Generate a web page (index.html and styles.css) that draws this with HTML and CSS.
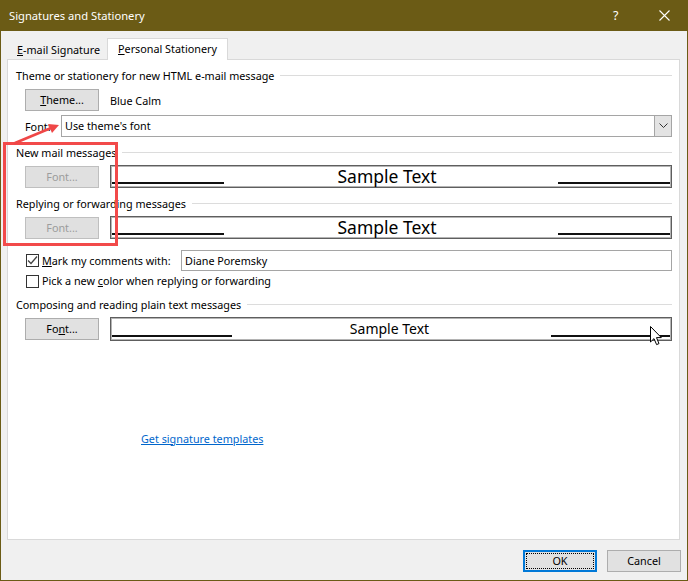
FILE: index.html
```html
<!DOCTYPE html>
<html>
<head>
<meta charset="utf-8">
<title>Signatures and Stationery</title>
<link rel="stylesheet" href="styles.css">
</head>
<body>
<div class="win">
  <div class="titlebar">
    <span class="title">Signatures and Stationery</span>
    <span class="help">?</span>
    <span class="close">
      <svg width="11" height="11" viewBox="0 0 11 11"><path d="M0.5 0.5 L10.5 10.5 M10.5 0.5 L0.5 10.5" stroke="#fff" stroke-width="1.1" fill="none"/></svg>
    </span>
  </div>
  <div class="client">
    <div class="tabs">
      <div class="tab"><span><u>E</u>-mail Signature</span></div>
      <div class="tab active"><span><u>P</u>ersonal Stationery</span></div>
    </div>
    <div class="panel">
      <div class="grp"><span>Theme or stationery for new HTML e-mail message</span><i class="rule"></i></div>
      <div class="row theme-row">
        <div class="btn"><u>T</u>heme...</div>
        <span class="theme-name">Blue Calm</span>
      </div>
      <div class="row font-row">
        <span class="font-label">Font:</span>
        <div class="select">
          <span class="select-text">Use theme's font</span>
          <span class="select-arrow">
            <svg width="9" height="6" viewBox="0 0 9 6"><path d="M0.5 0.5 L4.5 4.5 L8.5 0.5" stroke="#333" stroke-width="1" fill="none"/></svg>
          </span>
        </div>
      </div>
      <div class="grp g2"><span>New mail messages</span><i class="rule"></i></div>
      <div class="row sample-row">
        <div class="btn disabled">Font...</div>
        <div class="sample big">
          <i class="sline left"></i>
          <span class="stext">Sample Text</span>
          <i class="sline right"></i>
        </div>
      </div>
      <div class="grp g3"><span>Replying or forwarding messages</span><i class="rule"></i></div>
      <div class="row sample-row">
        <div class="btn disabled">Font...</div>
        <div class="sample big">
          <i class="sline left"></i>
          <span class="stext">Sample Text</span>
          <i class="sline right"></i>
        </div>
      </div>
      <div class="row check-row c1">
        <span class="chk checked">
          <svg width="11" height="11" viewBox="0 0 11 11"><path d="M1 5.5 L4 8.5 L10 1.5" stroke="#444" stroke-width="1.3" fill="none"/></svg>
        </span>
        <span class="chk-label"><u>M</u>ark my comments with:</span>
        <div class="textbox">Diane Poremsky</div>
      </div>
      <div class="row check-row c2">
        <span class="chk"></span>
        <span class="chk-label">Pick a new <u>c</u>olor when replying or forwarding</span>
      </div>
      <div class="grp g4"><span>Composing and reading plain text messages</span><i class="rule"></i></div>
      <div class="row sample-row plain-row">
        <div class="btn">Fo<u>n</u>t...</div>
        <div class="sample small">
          <i class="sline left"></i>
          <span class="stext">Sample Text</span>
          <i class="sline right"></i>
        </div>
      </div>
      <div class="link-row"><a class="link" href="#">Get signature templates</a></div>
    </div>
    <div class="footer">
      <div class="btn ok"><span class="focus">OK</span></div>
      <div class="btn">Cancel</div>
    </div>
  </div>

  <div class="annot-box"></div>
  <svg class="annot-arrow" width="70" height="34" viewBox="0 0 70 34">
    <path d="M14 27 L50 12" stroke="#ef4747" stroke-width="2.6" fill="none" stroke-linecap="round"/>
    <path d="M58 9 L47 8 L51 17 Z" fill="#ef4747"/>
  </svg>
  <svg class="cursor" width="13" height="20" viewBox="0 0 13 20">
    <path d="M0.5 0.5 L0.5 16 L4 12.6 L6.6 18.6 L9 17.6 L6.5 11.6 L11.3 11.6 Z" fill="#fff" stroke="#000" stroke-width="1" stroke-linejoin="miter"/>
  </svg>
</div>
</body>
</html>
```

FILE: styles.css
```css
* { box-sizing: border-box; }
html, body { margin: 0; padding: 0; background: #f0f0f0; }
body {
  font-family: "Noto Sans", "Liberation Sans", sans-serif;
  font-size: 10.8px;
  color: #000;
}
u { text-decoration: underline; text-underline-offset: 1px; }

.win {
  position: relative;
  width: 688px;
  height: 581px;
  border: 1px solid #6b5b15;
  border-top: 0;
  background: #f0f0f0;
  overflow: hidden;
}

.titlebar {
  height: 31px;
  margin: 0 -1px;
  background: #6b5b15;
  color: #fff;
  display: flex;
  align-items: center;
  padding-left: 9px;
  font-size: 11.2px;
}
.title { flex: 1; padding-bottom: 1px; }
.help { width: 10px; margin-right: 36px; font-size: 12.5px; padding-bottom: 1px; }
.close { width: 11px; height: 11px; margin-right: 18px; display: flex; margin-top: -1px; }

.client { height: 549px; }

.tabs {
  display: flex;
  align-items: flex-end;
  height: 28px;
  padding-left: 7px;
  padding-top: 7px;
}
.tab {
  width: 99px;
  height: 19px;
  display: flex;
  align-items: center;
  padding-left: 9px;
  padding-bottom: 1px;
}
.tab.active {
  width: 121px;
  height: 22px;
  background: #fff;
  border: 1px solid #d9d9d9;
  border-bottom: 0;
  margin-bottom: -1px;
  padding-left: 10px;
  padding-bottom: 3px;
  position: relative;
  z-index: 2;
}

.panel {
  margin-left: 6px;
  width: 673px;
  height: 481px;
  background: #fff;
  border: 1px solid #d9d9d9;
  padding: 7px 7px 0 8px;
}

.grp {
  display: flex;
  align-items: center;
  height: 16px;
}
.grp .rule {
  flex: 1;
  height: 1px;
  background: #dcdcdc;
  margin-left: 6px;
  margin-top: 1px;
}
.g2 { margin-top: 7px; }
.g3 { margin-top: 7px; }
.g4 { margin-top: 5px; }

.row { display: flex; align-items: center; }

.btn {
  width: 74px;
  height: 22px;
  background: #e1e1e1;
  border: 1px solid #adadad;
  display: flex;
  align-items: center;
  justify-content: center;
  padding-bottom: 1px;
  flex: none;
}
.btn.disabled {
  background: #e0e0e0;
  border-color: #bfbfbf;
  color: #9c9c9c;
}

.theme-row { margin-top: 6px; padding-left: 9px; height: 22px; }
.theme-name { margin-left: 11px; }

.font-row { margin-top: 4px; padding-left: 9px; height: 22px; }
.font-label { width: 36px; }
.select {
  flex: 1;
  height: 22px;
  border: 1px solid #a5a5a5;
  display: flex;
  align-items: center;
  padding-left: 3px;
}
.select-text { flex: 1; padding-bottom: 1px; }
.select-arrow {
  width: 17px;
  height: 20px;
  background: #e3e3e3;
  border-left: 1px solid #a5a5a5;
  display: flex;
  align-items: center;
  justify-content: center;
}

.sample-row { margin-top: 5px; padding-left: 9px; height: 23px; }
.sample {
  margin-left: 11px;
  flex: 1;
  height: 23px;
  border: 1px solid #5e5e5e;
  box-shadow: inset 0 0 0 1px #b4b4b4;
  display: flex;
  align-items: flex-end;
  padding: 0 1px;
}
.sline {
  height: 2px;
  background: #111;
  margin-bottom: 3px;
  flex: none;
}
.sample.big .sline { width: 112px; }
.stext {
  flex: 1;
  text-align: center;
  align-self: center;
}
.sample.big .stext { font-size: 17.5px; padding-bottom: 2px; padding-right: 8px; }

.plain-row { height: 24px; }
.plain-row .btn { height: 22px; }
.sample.small { height: 24px; }
.sample.small .sline.left { width: 120px; }
.sample.small .sline.right { width: 119px; }
.sample.small .stext { font-size: 14px; padding-bottom: 1px; padding-right: 4px; }

.check-row { padding-left: 10px; }
.c1 { margin-top: 11px; height: 21px; }
.c2 { height: 20px; }
.chk {
  width: 13px;
  height: 13px;
  border: 1px solid #333;
  background: #fff;
  display: flex;
  align-items: center;
  justify-content: center;
  flex: none;
}
.chk-label { margin-left: 3px; padding-bottom: 1px; }
.c1 .chk-label { width: 139px; }
.textbox {
  flex: 1;
  height: 21px;
  border: 1px solid #a5a5a5;
  display: flex;
  align-items: center;
  padding-left: 3px;
  padding-bottom: 1px;
}

.link-row { margin-top: 89px; padding-left: 125px; height: 16px; display: flex; align-items: center; }
.link { color: #0066cc; text-decoration: underline; text-underline-offset: 1px; }

.footer {
  margin-top: 10px;
  display: flex;
  justify-content: flex-end;
  gap: 10px;
  padding-right: 6px;
}
.btn.ok {
  border: 2px solid #0078d7;
  padding: 1px;
}
.btn.ok .focus {
  width: 100%;
  height: 100%;
  border: 1px dotted #000;
  display: flex;
  align-items: center;
  justify-content: center;
  padding-bottom: 1px;
}

.annot-box {
  position: absolute;
  left: 2px;
  top: 142px;
  width: 115px;
  height: 104px;
  border: 3px solid #f24a4a;
  z-index: 5;
}
.annot-arrow {
  position: absolute;
  left: 0;
  top: 116px;
  z-index: 6;
}
.cursor {
  position: absolute;
  left: 649px;
  top: 326px;
  z-index: 7;
}
```
